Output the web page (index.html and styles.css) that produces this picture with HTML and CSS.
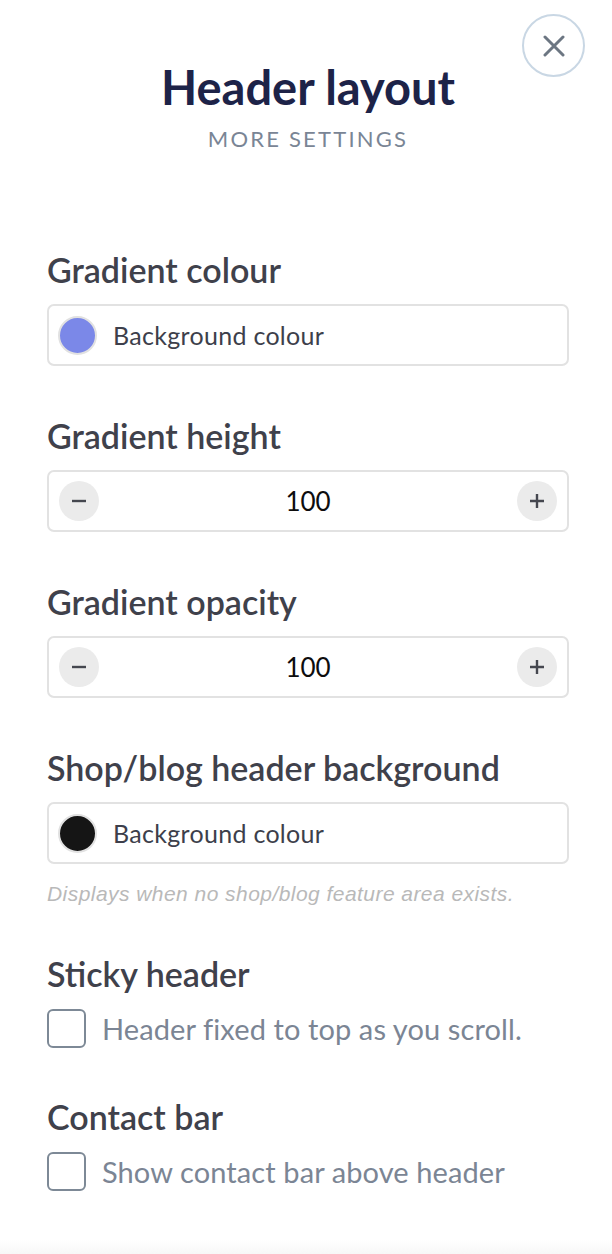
FILE: index.html
```html
<!DOCTYPE html>
<html lang="en">
<head>
<meta charset="utf-8">
<title>Header layout</title>
<link rel="stylesheet" href="styles.css">
</head>
<body>
<div class="panel">
  <button class="close" aria-label="Close">
    <svg width="22" height="22" viewBox="0 0 22 22"><path d="M2 2 L20 20 M20 2 L2 20" stroke="#6c7682" stroke-width="3" stroke-linecap="round" fill="none"/></svg>
  </button>
  <header class="head">
    <h1 class="title">Header layout</h1>
    <div class="subtitle">MORE SETTINGS</div>
  </header>

  <section class="field">
    <div class="label">Gradient colour</div>
    <div class="box color-box">
      <span class="swatch swatch-blue"></span>
      <span class="box-text">Background colour</span>
    </div>
  </section>

  <section class="field">
    <div class="label">Gradient height</div>
    <div class="box stepper">
      <span class="step-btn"><svg width="18" height="18" viewBox="0 0 18 18"><path d="M2 9 H16" stroke="#45474f" stroke-width="2.4"/></svg></span>
      <span class="step-val">100</span>
      <span class="step-btn"><svg width="18" height="18" viewBox="0 0 18 18"><path d="M2 9 H16 M9 2 V16" stroke="#45474f" stroke-width="2.4"/></svg></span>
    </div>
  </section>

  <section class="field">
    <div class="label">Gradient opacity</div>
    <div class="box stepper">
      <span class="step-btn"><svg width="18" height="18" viewBox="0 0 18 18"><path d="M2 9 H16" stroke="#45474f" stroke-width="2.4"/></svg></span>
      <span class="step-val">100</span>
      <span class="step-btn"><svg width="18" height="18" viewBox="0 0 18 18"><path d="M2 9 H16 M9 2 V16" stroke="#45474f" stroke-width="2.4"/></svg></span>
    </div>
  </section>

  <section class="field field-help">
    <div class="label">Shop/blog header background</div>
    <div class="box color-box">
      <span class="swatch swatch-black"></span>
      <span class="box-text">Background colour</span>
    </div>
    <div class="help">Displays when no shop/blog feature area exists.</div>
  </section>

  <section class="field field-check">
    <div class="label">Sticky header</div>
    <label class="check">
      <span class="checkbox"></span>
      <span class="check-text">Header fixed to top as you scroll.</span>
    </label>
  </section>

  <section class="field field-check">
    <div class="label">Contact bar</div>
    <label class="check">
      <span class="checkbox"></span>
      <span class="check-text">Show contact bar above header</span>
    </label>
  </section>
</div>
<div class="foot"></div>
</body>
</html>
```

FILE: styles.css
```css
* { box-sizing: border-box; }
html, body { margin: 0; padding: 0; background: #fff; }
body { font-family: Lato, "Noto Sans", sans-serif; height: 1254px; overflow: hidden; position: relative; }

.panel {
  position: relative;
  padding: 59px 43px 0 47px;
}

.close {
  position: absolute;
  top: 14px;
  right: 27px;
  width: 63px;
  height: 63px;
  border-radius: 50%;
  border: 2px solid #c9d7e4;
  background: #fff;
  display: flex;
  align-items: center;
  justify-content: center;
  padding: 0;
}

.head { text-align: center; margin-bottom: 101px; }
.title {
  margin: 0;
  font-size: 47px;
  line-height: 56px;
  font-weight: 700;
  color: #1d2348;
}
.subtitle {
  margin-top: 11px;
  font-size: 22px;
  line-height: 26px;
  letter-spacing: 2.2px;
  color: #7a8595;
}

.field { margin-bottom: 53px; }
.label {
  font-size: 34px;
  line-height: 34px;
  font-weight: 600;
  color: #3f414b;
  margin-bottom: 17px;
}

.box {
  height: 62px;
  border: 2px solid #e2e2e2;
  border-radius: 7px;
  display: flex;
  align-items: center;
}
.color-box { padding-left: 9px; gap: 16px; }
.swatch {
  width: 39px;
  height: 39px;
  border-radius: 50%;
  border: 2px solid #e1e1e1;
  flex: none;
}
.swatch-blue { background: #7b88e8; }
.swatch-black { background: #151515; }
.box-text { font-size: 25px; letter-spacing: 0.3px; color: #3d3f4b; }

.stepper { justify-content: space-between; padding: 0 10px 0 10px; }
.step-btn {
  width: 40px;
  height: 40px;
  border-radius: 50%;
  background: #ebebeb;
  display: flex;
  align-items: center;
  justify-content: center;
}
.step-val { font-size: 26px; color: #0d0d0d; }

.field-help { margin-bottom: 51px; }
.help {
  margin-top: 18px;
  font-family: "Liberation Sans", Arial, sans-serif;
  font-style: italic;
  font-size: 21px;
  line-height: 24px;
  letter-spacing: 0.45px;
  color: #b9b9b9;
}

.field-check { margin-bottom: 52px; }
.field-check .label { margin-bottom: 18px; }
.check { display: flex; align-items: center; gap: 16px; }
.checkbox {
  width: 39px;
  height: 39px;
  border: 2px solid #7d8996;
  border-radius: 6px;
  flex: none;
}
.check-text { font-size: 29px; letter-spacing: 0.1px; color: #7b8594; }

.foot {
  position: absolute;
  left: 0; right: 0; bottom: 0;
  height: 14px;
  background: linear-gradient(#fff, #f7f7f7);
}
```
